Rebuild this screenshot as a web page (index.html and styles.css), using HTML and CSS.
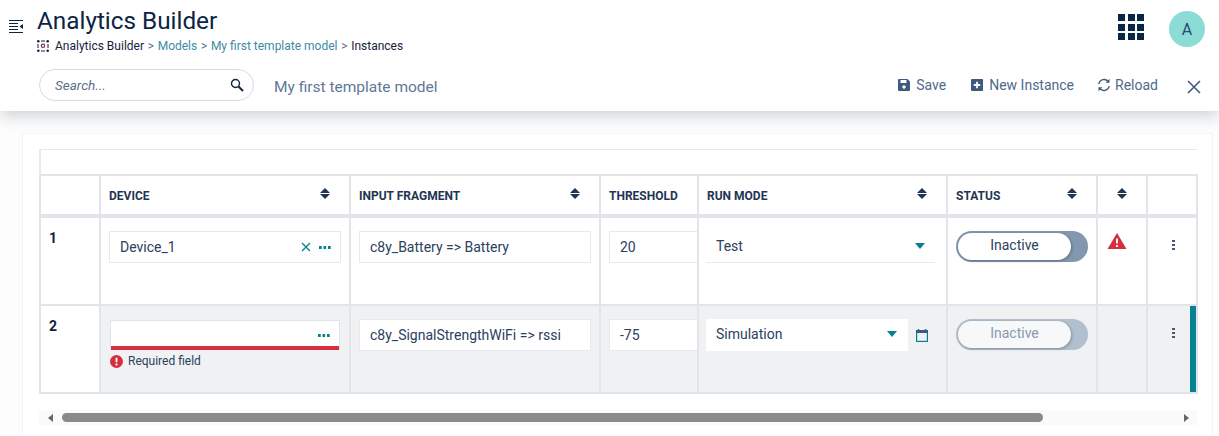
FILE: index.html
```html
<!DOCTYPE html>
<html lang="en">
<head>
  <meta charset="UTF-8">
  <title>Analytics Builder - Instances</title>
  <link rel="stylesheet" href="styles.css">
</head>
<body>
  <header class="topbar">
    <div class="title-row">
      <svg class="menu-icon" viewBox="0 0 14 14" width="14" height="14"><path d="M0 1.500h14M0 4.500h9M0 7.500h9M0 10.500h9M0 13.500h14" stroke="#0b2545" fill="none"/><path d="M14 5l-3.500 2.500L14 10z" fill="#0b2545"/></svg>
      <div class="title-text">
        <h1>Analytics Builder</h1>
        <div class="crumbs">
          <svg class="crumb-icon" viewBox="0 0 12 12" width="12" height="12"><circle cx="1.300" cy="1.300" r="1.300" fill="#14233c"/><circle cx="10.700" cy="1.300" r="1.300" fill="#14233c"/><circle cx="1.300" cy="10.700" r="1.300" fill="#14233c"/><circle cx="10.700" cy="10.700" r="1.300" fill="#14233c"/><path d="M4 1h4M1 4v4M11 4v4M4 11h4" stroke="#14233c"/><circle cx="6" cy="5.800" r="1.700" fill="none" stroke="#7a3350" stroke-width="1.200"/></svg>
          <span>Analytics Builder</span><i>&gt;</i><a>Models</a><i>&gt;</i><a>My first template model</a><i>&gt;</i><span>Instances</span>
        </div>
      </div>
      <div class="top-right">
        <div class="apps">
          <b></b><b></b><b></b><b></b><b></b><b></b><b></b><b></b><b></b>
        </div>
        <div class="avatar">A</div>
      </div>
    </div>
    <div class="action-row">
      <div class="search">
        <span>Search...</span>
        <svg viewBox="0 0 14 14" width="14" height="14"><circle cx="5.500" cy="5.500" r="4" fill="none" stroke="#14233c" stroke-width="1.400"/><path d="M8.500 8.500L13 13" stroke="#14233c" stroke-width="2"/></svg>
      </div>
      <div class="model-name">My first template model</div>
      <div class="actions">
        <span class="action save"><svg viewBox="0 0 12 12" width="12" height="12"><path d="M0 1a1 1 0 0 1 1-1h8.500L12 2.500V11a1 1 0 0 1-1 1H1a1 1 0 0 1-1-1z" fill="#3d5a80"/><path d="M2.500 1h6v3h-6z" fill="#fff"/><circle cx="6" cy="8" r="1.800" fill="#fff"/></svg>Save</span>
        <span class="action new"><svg viewBox="0 0 12 12" width="12" height="12"><rect width="12" height="12" rx="1" fill="#3d5a80"/><path d="M6 2.800v6.400M2.800 6h6.400" stroke="#fff" stroke-width="1.800"/></svg>New Instance</span>
        <span class="action reload"><svg viewBox="0 0 14 14" width="14" height="14"><path d="M1.800 6a5.300 5.300 0 0 1 9.400-2.400M12.200 8a5.300 5.300 0 0 1-9.400 2.400" fill="none" stroke="#3d5a80" stroke-width="1.300"/><path d="M12.500 0.800v4h-4zM1.500 13.200v-4h4z" fill="#3d5a80"/></svg>Reload</span>
        <svg class="close" viewBox="0 0 14 14" width="14" height="14"><path d="M1 1l12 12M13 1L1 13" stroke="#3d5a80" stroke-width="1.600"/></svg>
      </div>
    </div>
  </header>

  <main class="card">
    <div class="table-wrap">
      <div class="table-head-space"></div>
      <table class="grid">
        <colgroup>
          <col class="c-num"><col class="c-device"><col class="c-input"><col class="c-thresh"><col class="c-mode"><col class="c-status"><col class="c-flag"><col class="c-menu">
        </colgroup>
        <thead>
          <tr>
            <th></th>
            <th><div class="th-in">DEVICE<span class="sort"></span></div></th>
            <th><div class="th-in">INPUT FRAGMENT<span class="sort"></span></div></th>
            <th><div class="th-in">THRESHOLD</div></th>
            <th><div class="th-in">RUN MODE<span class="sort"></span></div></th>
            <th><div class="th-in">STATUS<span class="sort"></span></div></th>
            <th><div class="th-in only-sort"><span class="sort"></span></div></th>
            <th></th>
          </tr>
        </thead>
        <tbody>
          <tr class="row-first">
            <td class="num">1</td>
            <td>
              <div class="field">Device_1
                <span class="field-icons">
                  <svg viewBox="0 0 10 10" width="10" height="10"><path d="M1 1l8 8M9 1L1 9" stroke="#058192" stroke-width="1.300"/></svg>
                  <span class="dots"></span>
                </span>
              </div>
            </td>
            <td><div class="field">c8y_Battery =&gt; Battery</div></td>
            <td class="clip"><div class="field wide">20</div></td>
            <td>
              <div class="select line">Test<span class="caret"></span></div>
            </td>
            <td>
              <div class="toggle"><span class="knob">Inactive</span></div>
            </td>
            <td class="flag"><svg viewBox="0 0 20 18" width="20" height="18"><path d="M10 1l9.500 16H.5z" fill="#d62e3f"/><path d="M10 6.500v5M10 13v2" stroke="#fff" stroke-width="1.800"/></svg></td>
            <td class="menu"><span class="kebab"></span></td>
          </tr>
          <tr class="row-new">
            <td class="num">2</td>
            <td>
              <div class="field invalid">
                <span class="field-icons"><span class="dots"></span></span>
              </div>
              <div class="error"><svg viewBox="0 0 13 13" width="13" height="13"><circle cx="6.500" cy="6.500" r="6.500" fill="#d62e3f"/><path d="M6.500 2.800v4.500M6.500 8.500v2" stroke="#fff" stroke-width="1.800"/></svg>Required field</div>
            </td>
            <td><div class="field">c8y_SignalStrengthWiFi =&gt; rssi</div></td>
            <td class="clip"><div class="field wide">-75</div></td>
            <td>
              <div class="mode-row">
                <div class="select boxed">Simulation<span class="caret"></span></div>
                <svg viewBox="0 0 12 13" width="12" height="13"><path d="M2.500 0v2M9.500 0v2" stroke="#058192" stroke-width="1.500"/><rect x=".6" y="1.600" width="10.800" height="10.800" fill="none" stroke="#058192" stroke-width="1.200"/><path d="M0 1h12v3H0z" fill="#3d5a80"/></svg>
              </div>
            </td>
            <td>
              <div class="toggle off"><span class="knob">Inactive</span></div>
            </td>
            <td></td>
            <td class="menu marked"><span class="kebab"></span></td>
          </tr>
        </tbody>
      </table>
      <div class="scrollbar">
        <span class="arrow left"></span>
        <div class="track"><span class="thumb"></span></div>
        <span class="arrow right"></span>
      </div>
    </div>
  </main>
</body>
</html>
```

FILE: styles.css
```css
* {
  box-sizing: border-box;
}
html, body {
  height: 100%;
}
body {
  margin: 0;
  font-family: Roboto, "Liberation Sans", sans-serif;
  background: #fdfdfd;
  color: #14233c;
  overflow: hidden;
}
.topbar {
  height: 111px;
  background: white;
  box-shadow: 0 6px 14px rgba(40,55,75,0.2);
  padding: 6px 14px 0 9px;
}
.title-row {
  display: flex;
  align-items: flex-start;
  height: 58px;
}
.menu-icon {
  margin: 13px 14px 0 0;
}
h1 {
  margin: 0;
  font-size: 24.300px;
  font-weight: 400;
  line-height: 29px;
  color: #0b2545;
}
.crumbs {
  display: flex;
  align-items: center;
  font-size: 12px;
  line-height: 14px;
  margin-top: 4px;
  color: #14233c;
}
.crumb-icon {
  margin-right: 6px;
}
.crumbs a {
  color: #3e8aa5;
}
.crumbs i {
  font-style: normal;
  margin: 0 3.700px;
  color: #5b6f87;
}
.top-right {
  margin-left: auto;
  display: flex;
  align-items: center;
  gap: 25px;
  margin-top: 5px;
}
.apps {
  display: grid;
  grid-template-columns: repeat(3, 7px);
  gap: 2.500px;
  margin-top: -4px;
}
.apps b {
  height: 7px;
  background: #0b2545;
}
.avatar {
  width: 36px;
  height: 36px;
  border-radius: 50%;
  background: #8cdcd5;
  color: #2b4a6f;
  font-size: 16px;
  display: flex;
  align-items: center;
  justify-content: center;
}
.action-row {
  display: flex;
  align-items: center;
  padding-left: 30px;
  padding-right: 4px;
  height: 32px;
  margin-top: 5px;
}
.search {
  width: 215px;
  height: 32px;
  border: 1px solid #d5dce5;
  border-radius: 16px;
  padding: 0 9px 0 15px;
  display: flex;
  align-items: center;
  justify-content: space-between;
  font-size: 13.500px;
  font-style: italic;
  color: #5b6f87;
}
.model-name {
  margin: 3px 0 0 20px;
  font-size: 15.500px;
  color: #5f7896;
}
.actions {
  margin-left: auto;
  display: flex;
  align-items: center;
  font-size: 14px;
  color: #4d6a8c;
}
.action {
  display: flex;
  align-items: center;
  gap: 6px;
}
.save {
  margin-right: 25px;
}
.new {
  margin-right: 23px;
}
.reload {
  gap: 4px;
  margin-right: 29px;
}
.close {
  margin-top: 3px;
}
.card {
  margin: 22px 6px 0 22px;
  height: 320px;
  background: white;
  border: 1px solid #f3f4f5;
  padding: 15px 15px 0 16px;
}
.table-wrap {
  border-top: 1px solid #e6e9ed;
}
.table-head-space {
  height: 24px;
  border-left: 2px solid #e6e9ed;
}
.grid {
  width: 1157px;
  table-layout: fixed;
  border-collapse: collapse;
  font-size: 14px;
}
.c-num { width: 60px; }
.c-device { width: 250px; }
.c-input { width: 250px; }
.c-thresh { width: 98px; }
.c-mode { width: 249px; }
.c-status { width: 150px; }
.c-flag { width: 50px; }
.c-menu { width: 50px; }
.grid th, .grid td {
  border: 2px solid #e1e5ea;
  padding: 0;
  vertical-align: top;
}
.grid th {
  height: 40px;
  text-align: left;
  border-bottom-width: 4px;
  font-size: 12px;
  font-weight: 700;
  color: #1e3553;
}
.th-in {
  display: flex;
  align-items: center;
  justify-content: space-between;
  height: 38px;
  padding: 1px 19px 0 8px;
}
.only-sort {
  justify-content: center;
  padding: 1px 0 0;
}
.sort {
  position: relative;
  width: 10px;
  height: 11px;
  margin-top: -4px;
}
.sort::before, .sort::after {
  content: "";
  position: absolute;
  left: 0;
  border-left: 5px solid transparent;
  border-right: 5px solid transparent;
}
.sort::before {
  top: 0;
  border-bottom: 5px solid #1e3553;
}
.sort::after {
  bottom: 0;
  border-top: 5px solid #1e3553;
}
.grid td {
  height: 88px;
  padding: 13px 8px 0;
  color: #2c4060;
}
.row-first td {
  height: 89px;
}
.row-new td {
  background: #eff1f3;
}
.grid td.num {
  background: white;
  font-weight: 700;
  padding: 12px 8px 0;
  color: #14233c;
}
.field {
  height: 32px;
  border: 1px solid #e6e9ed;
  background: white;
  padding: 0 10px;
  display: flex;
  align-items: center;
  white-space: nowrap;
}
.field.wide {
  width: 110px;
}
.clip {
  overflow: hidden;
}
.field-icons {
  margin-left: auto;
  display: flex;
  align-items: center;
  gap: 8px;
  margin-right: -1px;
}
.dots {
  width: 12px;
  height: 3px;
  background: radial-gradient(circle at 1.500px 1.500px, #058192 1.500px, transparent 1.600px) 0 0 / 4.500px 3px repeat-x;
}
.invalid {
  height: 30px;
  margin: 1px 1px 0;
  box-shadow: inset 0 -4px 0 #d62e3f;
  border-color: #dfe3e8;
  border-bottom: 0;
}
.error {
  display: flex;
  align-items: center;
  gap: 5px;
  margin: 4px 0 0 1px;
  font-size: 12px;
  color: #2c4060;
}
.select {
  height: 32px;
  padding: 0 10px 2px;
  display: flex;
  align-items: center;
  justify-content: space-between;
}
.select.line {
  width: 229px;
  margin-left: -1px;
  border-bottom: 1px solid #e6e9ed;
}
.select.boxed {
  width: 202px;
  background: white;
  padding-right: 11px;
}
.caret {
  width: 0;
  height: 0;
  border-left: 5px solid transparent;
  border-right: 5px solid transparent;
  border-top: 6px solid #058192;
}
.mode-row {
  display: flex;
  align-items: center;
  gap: 8px;
  margin-left: -1px;
}
.toggle {
  width: 132px;
  height: 31px;
  border-radius: 16px;
  background: #8297b0;
  padding: 2px 17px 2px 2px;
}
.knob {
  display: block;
  height: 27px;
  border-radius: 14px;
  background: white;
  text-align: center;
  line-height: 24px;
  color: #2c4060;
  box-shadow: 1px 1px 3px rgba(0,0,0,0.25);
}
.toggle.off {
  background: #b1bfce;
}
.toggle.off .knob {
  background: #f6f8fa;
  color: #8c99aa;
}
.grid td.flag {
  text-align: center;
  padding: 14px 11px 0 0;
}
.grid td.menu {
  position: relative;
  padding-top: 21px;
}
.kebab {
  display: block;
  width: 3px;
  height: 11px;
  margin-left: 16px;
  background: radial-gradient(circle, #3d5a80 1.400px, transparent 1.500px) 0 0 / 3px 4px repeat-y;
}
.marked::after {
  content: "";
  position: absolute;
  top: 0;
  bottom: 0;
  right: 0;
  width: 6px;
  background: #058192;
}
.scrollbar {
  height: 15px;
  margin-top: 16px;
  background: #fafafa;
  display: flex;
  align-items: center;
}
.track {
  flex: 1;
  height: 9px;
  margin: 0 12px 0 9px;
}
.thumb {
  display: block;
  width: 981px;
  height: 9px;
  border-radius: 5px;
  background: #8a8a8a;
}
.arrow {
  width: 0;
  height: 0;
  border-top: 4px solid transparent;
  border-bottom: 4px solid transparent;
}
.arrow.left {
  margin-left: 9px;
  border-right: 5px solid #666;
}
.arrow.right {
  margin-right: 8px;
  border-left: 5px solid #666;
}
```
